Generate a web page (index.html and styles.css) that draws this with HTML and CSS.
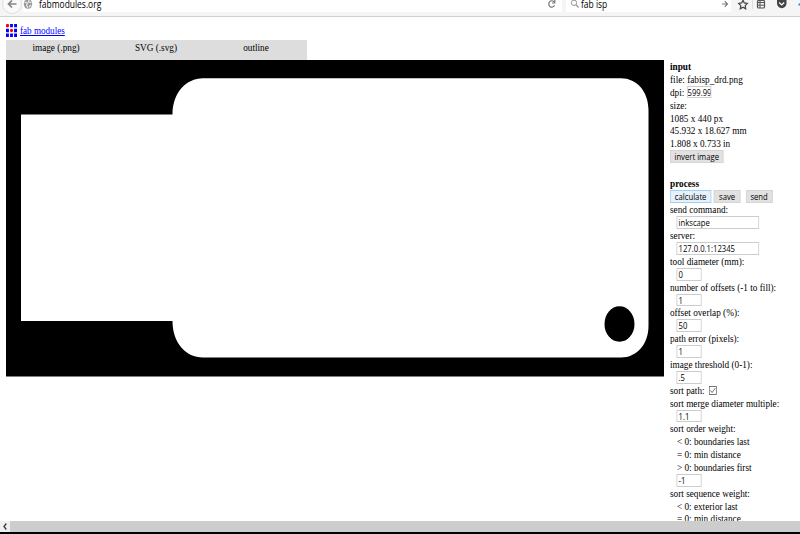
FILE: index.html
```html
<!DOCTYPE html>
<html lang="en">
<head>
<meta charset="utf-8">
<title>fab modules</title>
<link rel="stylesheet" href="styles.css">
</head>
<body>
<header class="chrome">
  <svg class="back" width="22" height="16" viewBox="0 0 22 16"><circle cx="12" cy="4" r="9.5" fill="#fafafa" stroke="#dedede"/><path d="M16.500 4H8.500M12 .5L8.500 4l3.500 3.500" fill="none" stroke="#858585" stroke-width="1.7"/></svg>
  <div class="address">
    <svg class="globe" width="10" height="12" viewBox="0 0 10 12"><ellipse cx="5" cy="4" rx="4.2" ry="4.8" fill="#999"/><path d="M1.5 2l3 1-1 2 1.5 3M6 0l-.5 2 3 .5M6 7l2-2" fill="none" stroke="#eee" stroke-width="1.1"/></svg>
    <span class="url">fabmodules.org</span>
    <svg class="reload" width="10" height="12" viewBox="0 0 10 12"><path d="M7.5 5.300A3 3.200 0 1 1 7 1.800M7.800 0v3H5" fill="none" stroke="#777" stroke-width="1.200"/></svg>
  </div>
  <div class="search">
    <svg width="10" height="12" viewBox="0 0 10 12"><circle cx="4" cy="2.8" r="2.7" fill="none" stroke="#999" stroke-width="1"/><path d="M5.8 4.8L8.7 7.500" stroke="#999" stroke-width="1.3"/></svg>
    <span class="query">fab isp</span>
    <svg class="go" width="8" height="12" viewBox="0 0 8 12"><path d="M1 4h5M3.7 1.2L6.5 4 3.7 6.8" fill="none" stroke="#777" stroke-width="1.1"/></svg>
  </div>
  <svg class="tools" width="66" height="16" viewBox="734 0 66 16">
    <path d="M743 .2l1.3 2.7 3 .5-2.1 2.2.5 3.2-2.7-1.6-2.7 1.6.5-3.2-2.1-2.2 3-.5z" fill="none" stroke="#444" stroke-width="1.2"/>
    <path d="M752.5 0v9" stroke="#ddd"/>
    <rect x="757.5" y=".5" width="7" height="7.5" rx="1" fill="none" stroke="#555" stroke-width="1.2"/><path d="M758 2.5h7M758 5.2h7M760 0v8" stroke="#555"/>
    <path d="M777 0h9.500v3.500a4.700 4.700 0 0 1-9.500 0z" fill="#444"/><path d="M779.200 2.500l2.500 2.500 2.500-2.500" fill="none" stroke="#fff" stroke-width="1.2"/>
    <path d="M798.500 4.500h1.500" stroke="#1688e0" stroke-width="2"/>
  </svg>
</header>
<main class="page">
  <div class="brand">
    <svg width="11" height="13" viewBox="0 0 11 13"><path d="M4.100 0h2.800v3.300H4.100zM8.100 0h2.900v3.300H8.100zM0 4.800h2.900v3.400H0zM8.100 4.800h2.900v3.400H8.100zM0 9.600h2.900V13H0zM4.100 9.600h2.800V13H4.100zM8.100 9.600h2.900V13H8.100z" fill="#00f"/><ellipse cx="1.500" cy="1.700" rx="1.600" ry="1.800" fill="#f00"/><ellipse cx="5.500" cy="6.500" rx="1.600" ry="1.800" fill="#f00"/></svg>
    <a href="#"><span>fab modules</span></a>
  </div>
  <nav class="menu"><span>image (.png)</span><span>SVG (.svg)</span><span>outline</span></nav>
  <div class="work">
    <svg class="board" width="658" height="317" viewBox="6 60 658 317"><path d="M6 60h658v316.500H6z"/><path d="M21 114.500H172.500C172.500 93 186 78.300 203 78.300H621C637 78.300 648.500 92 648.500 110V326C648.500 344 637 357.500 621 357.500H203C186 357.500 172.500 343 172.500 321H21z" fill="#fff"/><ellipse cx="619.500" cy="324" rx="15" ry="17.700"/></svg>
    <aside class="panel">
      <div class="row"><b>input</b></div>
      <div class="row">file: fabisp_drd.png</div>
      <div class="row">dpi:&nbsp;<span class="field small flush">599.99</span></div>
      <div class="row">size:</div>
      <div class="row">1085 x 440 px</div>
      <div class="row">45.932 x 18.627 mm</div>
      <div class="row">1.808 x 0.733 in</div>
      <div class="row last"><span class="button invert">invert image</span></div>
      <div class="row"><b>process</b></div>
      <div class="row actions"><span class="button calculate">calculate</span><span class="button save">save</span><span class="button send">send</span></div>
      <div class="row">send command:</div>
      <div class="row"><span class="field wide">inkscape</span></div>
      <div class="row">server:</div>
      <div class="row"><span class="field wide">127.0.0.1:12345</span></div>
      <div class="row">tool diameter (mm):</div>
      <div class="row"><span class="field small">0</span></div>
      <div class="row">number of offsets (-1 to fill):</div>
      <div class="row"><span class="field small">1</span></div>
      <div class="row">offset overlap (%):</div>
      <div class="row"><span class="field small">50</span></div>
      <div class="row">path error (pixels):</div>
      <div class="row"><span class="field small">1</span></div>
      <div class="row">image threshold (0-1):</div>
      <div class="row"><span class="field small">.5</span></div>
      <div class="row">sort path:<svg class="check" width="10" height="9" viewBox="0 0 10 9"><rect x=".5" y=".5" width="9" height="8" fill="#fff" stroke="#555" stroke-width=".8"/><path d="M2 4.500l2 2L8 2" fill="none" stroke="#555" stroke-width=".9"/></svg></div>
      <div class="row">sort merge diameter multiple:</div>
      <div class="row"><span class="field small">1.1</span></div>
      <div class="row">sort order weight:</div>
      <div class="row indent">&lt; 0: boundaries last</div>
      <div class="row indent">= 0: min distance</div>
      <div class="row indent">&gt; 0: boundaries first</div>
      <div class="row"><span class="field small">-1</span></div>
      <div class="row">sort sequence weight:</div>
      <div class="row indent">&lt; 0: exterior last</div>
      <div class="row indent">= 0: min distance</div>
    </aside>
  </div>
</main>
<footer class="scrollbar"><span class="arrow"><svg width="4" height="7" viewBox="0 0 4 7"><path d="M3.300 .5L1 3.500l2.300 3" fill="none" stroke="#444" stroke-width="1.400"/></svg></span></footer>
</body>
</html>
```

FILE: styles.css
```css
* { box-sizing: border-box; }
body {
  margin: 0;
  width: 800px;
  height: 534px;
  overflow: hidden;
  display: flex;
  flex-direction: column;
  background: #fff;
  color: #000;
  font-family: "Liberation Serif", serif;
  font-size: 11.4px;
}
svg { display: block; flex: none; }
.chrome {
  flex: none;
  display: flex;
  height: 17px;
  background: #f5f5f5;
  border-bottom: 1px solid #cfcfcf;
  overflow: hidden;
  font-family: "Open Sans", sans-serif;
  font-size: 10.2px;
  line-height: 8px;
}
.back { margin-right: 1px; }
.address, .search { display: flex; height: 12px; background: #fff; }
.address { width: 539px; }
.search { width: 165px; margin-left: 4px; padding-left: 4px; }
.url, .query { transform: scaleX(.83); transform-origin: 0 0; white-space: nowrap; }
.url { margin-left: 6px; width: 80px; }
.reload { margin-left: auto; margin-right: 5px; }
.query { margin-left: 1px; }
.go { margin-left: auto; margin-right: 2px; }
.tools { margin-left: auto; }
.page {
  flex: none;
  height: 504px;
  padding: 7px 0 0 6px;
  overflow: hidden;
}
.brand { display: flex; height: 16px; line-height: 13px; }
.brand a { margin-left: 2.5px; color: #00f; }
.brand span { display: inline-block; transform: scaleX(.8); transform-origin: 0 0; text-decoration: underline; }
.menu { display: flex; width: 301px; height: 20px; background: #ddd; line-height: 14px; }
.menu span { width: 100px; text-align: center; transform: scaleX(.81); }
.work { display: flex; align-items: flex-start; }
/* The panel is set in condensed proportions. */
.panel {
  flex: none;
  width: 160px;
  margin-left: 5.5px;
  transform: scaleX(.81);
  transform-origin: 0 0;
}
.row { display: flex; align-items: center; height: 12.89px; line-height: 12.89px; white-space: nowrap; }
.row.last { margin-bottom: 14px; }
.indent { padding-left: 8.5px; }
.field {
  height: 12.6px;
  margin-left: 8px;
  padding-left: 1.5px;
  border: 1px solid #ccc;
  background: #fff;
  font-family: "Open Sans", sans-serif;
  font-size: 9.5px;
  line-height: 11.6px;
  overflow: hidden;
}
.small { width: 30.5px; }
.wide { width: 102px; }
.flush { margin-left: 0; padding-left: 0; }
.button {
  height: 13.4px;
  flex: none;
  background: #e1e1e1;
  border: 1px solid #d4d4d4;
  font-family: "Open Sans", sans-serif;
  font-size: 9.5px;
  line-height: 12px;
  text-align: center;
}
.invert { width: 66px; }
.actions { height: 13.6px; gap: 3px; }
.calculate { width: 51px; background: #e5f1fb; border-color: #a5cff2; }
.save { width: 33px; }
.send { width: 33px; margin-left: 3.5px; }
.check { margin-left: 5px; }
.scrollbar {
  flex: none;
  height: 13px;
  background: #cdcdcd;
  border-bottom: 2px solid #000;
}
.arrow { display: flex; align-items: center; justify-content: center; width: 10px; height: 11px; background: #f0f0f0; }
```
